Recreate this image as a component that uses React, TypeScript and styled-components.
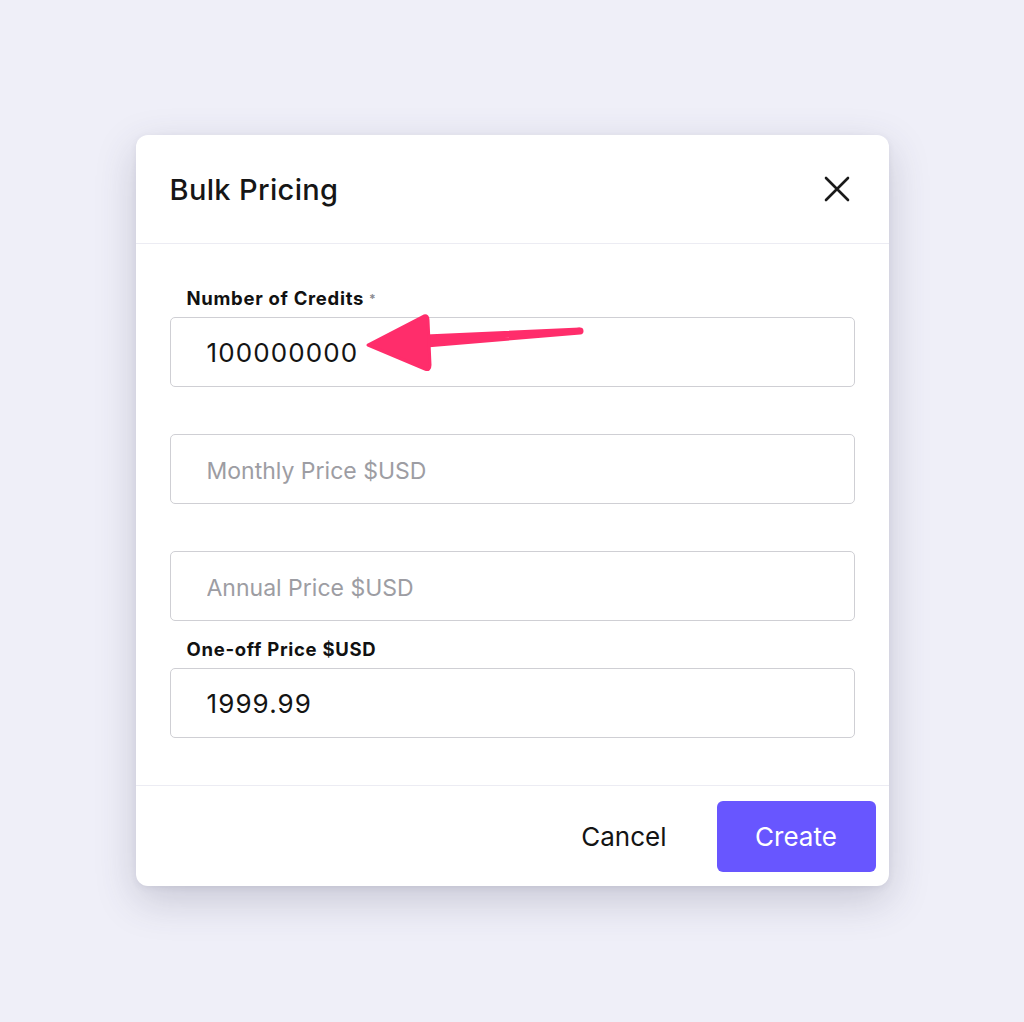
import React from 'react';
import styled, { createGlobalStyle } from 'styled-components';

const GlobalStyle = createGlobalStyle`
  html, body {
    margin: 0;
    padding: 0;
    background: #efeff8;
    font-family: Inter, "Noto Sans", sans-serif;
  }
`;

const Page = styled.div`
  width: 1024px;
  height: 1022px;
  display: flex;
  justify-content: center;
  padding-top: 135px;
  box-sizing: border-box;
`;

const Dialog = styled.div`
  position: relative;
  width: 753px;
  height: 751px;
  background: #ffffff;
  border-radius: 12px;
  box-shadow: 0 14px 40px rgba(60, 60, 90, 0.22), 0 2px 6px rgba(60, 60, 90, 0.08);
  display: flex;
  flex-direction: column;
`;

const Header = styled.div`
  height: 108px;
  display: flex;
  align-items: center;
  justify-content: space-between;
  padding: 0 39px 0 34px;
  border-bottom: 1px solid #ececf3;
`;

const Title = styled.h2`
  margin: 0;
  font-size: 29px;
  font-weight: 500;
  color: #161616;
  letter-spacing: 0.35px;
`;

const CloseButton = styled.button`
  border: 0;
  background: none;
  padding: 0;
  display: flex;
  color: #1a1a1a;
  cursor: pointer;
`;

const Body = styled.div`
  flex: 1;
  padding: 45px 34px 0;
  display: flex;
  flex-direction: column;
  gap: 19px;
`;

const Field = styled.div`
  display: flex;
  flex-direction: column;
  gap: 9px;
`;

const Label = styled.label`
  height: 19px;
  line-height: 19px;
  padding-left: 17px;
  font-size: 18.5px;
  font-weight: 700;
  color: #111;
  letter-spacing: 0.7px;
`;

const Star = styled.span`
  color: #8a8a90;
  font-size: 12px;
  vertical-align: top;
  margin-left: 5px;
`;

const Input = styled.input`
  box-sizing: border-box;
  width: 100%;
  height: 70px;
  border: 1.5px solid #cfcfd4;
  border-radius: 5px;
  padding: 0 0 0 36px;
  font-family: inherit;
  font-size: 26px;
  letter-spacing: 1.1px;
  color: #141414;
  outline: none;

  &::placeholder {
    color: #9d9da3;
    font-size: 23px;
    letter-spacing: 0;
  }
`;

const Footer = styled.div`
  height: 100px;
  border-top: 1px solid #ececf3;
  display: flex;
  align-items: center;
  justify-content: flex-end;
  gap: 50px;
  padding: 0 13px;
`;

const Button = styled.button<{ $primary?: boolean }>`
  border: 0;
  font-family: inherit;
  font-size: 26px;
  cursor: pointer;
  height: 71px;
  border-radius: 6px;
  padding: 0;
  width: ${(p) => (p.$primary ? '159px' : 'auto')};
  background: ${(p) => (p.$primary ? '#6856ff' : 'transparent')};
  color: ${(p) => (p.$primary ? '#ffffff' : '#141414')};
`;

const Arrow = styled.svg`
  position: absolute;
  left: 228px;
  top: 178px;
  pointer-events: none;
`;

const fields = [
  { label: 'Number of Credits', required: true, value: '100000000', placeholder: '' },
  { label: '', value: '', placeholder: 'Monthly Price $USD' },
  { label: '', value: '', placeholder: 'Annual Price $USD' },
  { label: 'One-off Price $USD', value: '1999.99', placeholder: '' },
];

const App = () => (
  <Page>
    <GlobalStyle />
    <Dialog>
      <Header>
        <Title>Bulk Pricing</Title>
        <CloseButton aria-label="Close">
          <svg width="26" height="26" viewBox="0 0 26 26">
            <path
              d="M2 2 L24 24 M24 2 L2 24"
              stroke="currentColor"
              strokeWidth="2.6"
              strokeLinecap="round"
            />
          </svg>
        </CloseButton>
      </Header>
      <Body>
        {fields.map((f, i) => (
          <Field key={i}>
            <Label>
              {f.label}
              {f.required && <Star>*</Star>}
            </Label>
            <Input defaultValue={f.value} placeholder={f.placeholder} />
          </Field>
        ))}
      </Body>
      <Footer>
        <Button>Cancel</Button>
        <Button $primary>Create</Button>
      </Footer>
      <Arrow width="222" height="64" viewBox="0 0 222 64">
        <path
          d="M216 18 L62 25 L62 31 Z"
          fill="#ff2d6b"
          stroke="#ff2d6b"
          strokeWidth="7"
          strokeLinejoin="round"
        />
        <path
          d="M4 32 L60 3 Q64 2 64 7 L66 52 Q66 58 61 56 Z"
          fill="#ff2d6b"
          stroke="#ff2d6b"
          strokeWidth="3"
          strokeLinejoin="round"
        />
      </Arrow>
    </Dialog>
  </Page>
);

export default App;
